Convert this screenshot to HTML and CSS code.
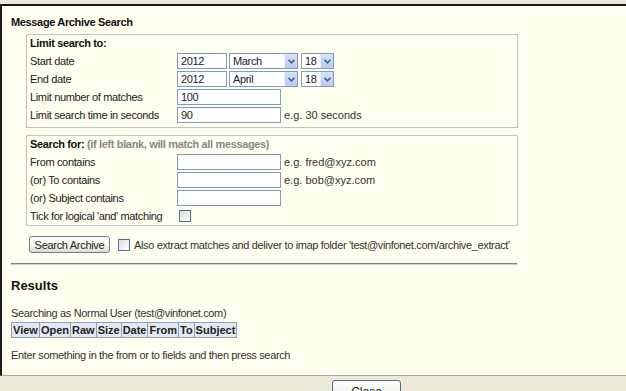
FILE: index.html
```html
<!doctype html>
<html lang="en">
<head>
    <meta charset="UTF-8">
    <title>Message Archive Search</title>
    <link rel="stylesheet" href="styles.css">
</head>
<body>
<div class="window">
    <div class="content">
        <h1 class="title">Message Archive Search</h1>

        <div class="box">
            <div class="box-title">Limit search to:</div>
            <div class="row">
                <span class="label">Start date</span>
                <input class="field year" type="text" value="2012">
                <span class="select month">
                    <select><option>March</option></select>
                    <span class="arrow"><svg width="7" height="5" viewBox="0 0 7 5"><path d="M0.5 0.8 L3.5 3.8 L6.5 0.8" fill="none" stroke="#4d6185" stroke-width="1.6"/></svg></span>
                </span>
                <span class="select day">
                    <select><option>18</option></select>
                    <span class="arrow"><svg width="7" height="5" viewBox="0 0 7 5"><path d="M0.5 0.8 L3.5 3.8 L6.5 0.8" fill="none" stroke="#4d6185" stroke-width="1.6"/></svg></span>
                </span>
            </div>
            <div class="row">
                <span class="label">End date</span>
                <input class="field year" type="text" value="2012">
                <span class="select month">
                    <select><option>April</option></select>
                    <span class="arrow"><svg width="7" height="5" viewBox="0 0 7 5"><path d="M0.5 0.8 L3.5 3.8 L6.5 0.8" fill="none" stroke="#4d6185" stroke-width="1.6"/></svg></span>
                </span>
                <span class="select day">
                    <select><option>18</option></select>
                    <span class="arrow"><svg width="7" height="5" viewBox="0 0 7 5"><path d="M0.5 0.8 L3.5 3.8 L6.5 0.8" fill="none" stroke="#4d6185" stroke-width="1.6"/></svg></span>
                </span>
            </div>
            <div class="row">
                <span class="label">Limit number of matches</span>
                <input class="field wide" type="text" value="100">
            </div>
            <div class="row">
                <span class="label">Limit search time in seconds</span>
                <input class="field wide" type="text" value="90">
                <span class="hint">e.g. 30 seconds</span>
            </div>
        </div>

        <div class="box second">
            <div class="box-title">Search for: <span class="muted">(if left blank, will match all messages)</span></div>
            <div class="row">
                <span class="label">From contains</span>
                <input class="field wide" type="text">
                <span class="hint">e.g. fred@xyz.com</span>
            </div>
            <div class="row">
                <span class="label">(or) To contains</span>
                <input class="field wide" type="text">
                <span class="hint">e.g. bob@xyz.com</span>
            </div>
            <div class="row">
                <span class="label">(or) Subject contains</span>
                <input class="field wide" type="text">
            </div>
            <div class="row">
                <span class="label">Tick for logical 'and' matching</span>
                <input class="check tick" type="checkbox">
            </div>
        </div>

        <div class="actions">
            <button class="btn" type="button">Search Archive</button>
            <input class="check" type="checkbox">
            <span class="extract">Also extract matches and deliver to imap folder 'test@vinfonet.com/archive_extract'</span>
        </div>

        <div class="rule"></div>

        <h2 class="results">Results</h2>
        <div class="user">Searching as Normal User (test@vinfonet.com)</div>
        <table class="grid">
            <tr>
                <th>View</th>
                <th>Open</th>
                <th>Raw</th>
                <th>Size</th>
                <th>Date</th>
                <th>From</th>
                <th>To</th>
                <th>Subject</th>
            </tr>
        </table>
        <div class="note">Enter something in the from or to fields and then press search</div>
    </div>
</div>
<div class="footer">
    <button class="btn close" type="button">Close</button>
</div>
</body>
</html>
```

FILE: styles.css
```css
html, body {
    margin: 0;
    height: 391px;
    overflow: hidden;
}

body {
    background-color: #ece9d8;
    font-family: "Liberation Sans", Arial, sans-serif;
    font-size: 11px;
    letter-spacing: -0.35px;
    color: #222;
}

.window {
    margin-top: 4px;
    height: 369px;
    border-top: 2px solid #1b1b1b;
    border-left: 2px solid #1b1b1b;
    border-bottom: 1px solid #aca899;
    background-color: #fffff0;
}

.content {
    padding: 9px 0 0 9px;
}

.title {
    margin: 0;
    font-size: 11px;
    line-height: 14px;
    font-weight: bold;
    color: #111;
}

.box {
    width: 487px;
    margin: 5px 0 0 15px;
    padding: 0 0 3px 3px;
    border: 1px solid #c3c3c3;
}

.box.second {
    margin-top: 7px;
    padding-bottom: 0;
}

.box-title {
    height: 17px;
    line-height: 17px;
    font-weight: bold;
    color: #111;
}

.muted {
    color: #888;
}

.row {
    display: flex;
    align-items: center;
    height: 18px;
}

.label {
    width: 147px;
}

.field {
    box-sizing: border-box;
    height: 16px;
    margin: 0;
    padding: 0 3px;
    border: 1px solid #7f9db9;
    background: #fff;
    font-family: inherit;
    font-size: 11px;
    letter-spacing: inherit;
    color: #222;
}

.year {
    width: 50px;
}

.wide {
    width: 104px;
}

.select {
    position: relative;
    display: inline-block;
    height: 16px;
}

.select select {
    box-sizing: border-box;
    width: 100%;
    height: 16px;
    margin: 0;
    padding: 0 3px;
    border: 1px solid #7f9db9;
    background: #fff;
    font-family: inherit;
    font-size: 11px;
    letter-spacing: inherit;
    color: #222;
    appearance: none;
    -webkit-appearance: none;
    outline: none;
}

.select .arrow {
    position: absolute;
    top: 1px;
    right: 1px;
    width: 13px;
    height: 14px;
    display: flex;
    align-items: center;
    justify-content: center;
    background: linear-gradient(#d6e2fc, #b6cbf6);
    border-left: 1px solid #e6eefc;
    box-sizing: border-box;
}

.month {
    width: 69px;
    margin-left: 2px;
}

.day {
    width: 33px;
    margin-left: 3px;
}

.hint {
    margin-left: 3px;
    color: #333;
    letter-spacing: 0;
}

.check {
    box-sizing: border-box;
    width: 12px;
    height: 12px;
    margin: 0;
    border: 1px solid #52719a;
    background: linear-gradient(135deg, #dcdcd6, #fff);
    appearance: none;
    -webkit-appearance: none;
}

.tick {
    margin-left: 2px;
}

.actions {
    display: flex;
    align-items: center;
    height: 17px;
    margin: 10px 0 0 18px;
}

.btn {
    box-sizing: border-box;
    height: 17px;
    padding: 0 4px;
    border: 1px solid #6a7f9e;
    border-radius: 3px;
    background: linear-gradient(#ffffff, #f2f2ec 60%, #dcdcd4);
    font-family: inherit;
    font-size: 11px;
    letter-spacing: -0.3px;
    white-space: nowrap;
    color: #222;
}

.actions .btn {
    width: 81px;
    margin-right: 8px;
}

.extract {
    margin-left: 4px;
    color: #333;
}

.rule {
    width: 506px;
    margin-top: 10px;
    border-top: 1px solid #7e7e7e;
    border-bottom: 1px solid #cfcfc8;
}

.results {
    margin: 13px 0 0 0;
    font-size: 13px;
    line-height: 16px;
    font-weight: bold;
    letter-spacing: 0;
    color: #111;
}

.user {
    margin-top: 13px;
    line-height: 13px;
    color: #333;
}

.grid {
    margin-top: 2px;
    border-collapse: collapse;
    border: 1px solid #7d8ea6;
}

.grid th {
    height: 14px;
    padding: 0 1px;
    border: 1px solid #8ea1bb;
    background-color: #e2e9f3;
    font-size: 11px;
    font-weight: bold;
    letter-spacing: 0;
    color: #222;
    line-height: 13px;
}

.note {
    margin-top: 11px;
    line-height: 13px;
    color: #333;
}

.footer {
    padding: 4px 0 0 332px;
}

.close {
    width: 69px;
    height: 23px;
    padding: 0;
    border-color: #4a6a98;
    font-size: 12px;
    letter-spacing: 0;
}
```
